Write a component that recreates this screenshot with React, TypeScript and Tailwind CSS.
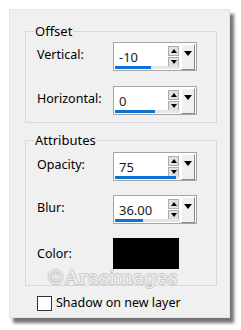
import React from 'react';

// Drop Shadow style dialog fragment: two group boxes with spin fields,
// a colour swatch and a "new layer" checkbox.

const FONT = { fontFamily: '"Noto Sans", "Liberation Sans", sans-serif' };

function SpinField({ value, fill }: { value: string; fill: number }) {
  return (
    <div className="relative w-[84px] h-[29px] border border-[#a5a5a5] bg-white flex">
      <div className="flex-1 relative">
        <span className="absolute left-[5px] top-[6px] text-[13px] leading-[16px] text-[#1a1a1a]">{value}</span>
        <div className="absolute left-[1px] bottom-[1px] w-[65px] h-[3px] bg-[#e6e6e6]">
          <div className="h-full bg-[#0a73d6]" style={{ width: `${fill}%` }} />
        </div>
      </div>
      {/* spin arrows */}
      <div className="flex flex-col gap-[1px] pt-[3px] pr-[2px]">
        <div className="w-[11px] h-[10px] border border-[#adadad] bg-[#e1e1e1] flex items-center justify-center">
          <div className="w-0 h-0 border-l-[3px] border-r-[3px] border-b-[4px] border-l-transparent border-r-transparent border-b-black" />
        </div>
        <div className="w-[11px] h-[10px] border border-[#adadad] bg-[#e1e1e1] flex items-center justify-center">
          <div className="w-0 h-0 border-l-[3px] border-r-[3px] border-t-[4px] border-l-transparent border-r-transparent border-t-black" />
        </div>
      </div>
      {/* dropdown button */}
      <div className="w-[14px] h-[26px] mt-[1px] mr-[1px] bg-[#f0f0f0] border-t border-l border-t-white border-l-white border-r border-b border-r-[#8a8a8a] border-b-[#8a8a8a] flex justify-center pt-[6px]">
        <div className="w-0 h-0 border-l-[4px] border-r-[4px] border-t-[5px] border-l-transparent border-r-transparent border-t-black" />
      </div>
    </div>
  );
}

function Row({ label, children }: { label: string; children: React.ReactNode }) {
  return (
    <div className="flex items-start">
      <span className="w-[76px] text-[12.5px] leading-[16px] text-black mt-[5px]">{label}</span>
      {children}
    </div>
  );
}

function Group({ title, className, children }: { title: string; className: string; children: React.ReactNode }) {
  return (
    <div className={`relative w-[192px] border border-[#d9d9d9] pl-[11px] ${className}`}>
      <span className="absolute left-[8px] top-[-9px] px-[1px] bg-[#f0f0f0] text-[13px] leading-[16px] text-black">{title}</span>
      {children}
    </div>
  );
}

export default function App() {
  return (
    <div className="w-[241px] h-[330px] bg-white pt-[9px] pl-[9px]" style={FONT}>
      <div className="relative w-[221px] h-[309px] bg-[#f0f0f0] border border-[#e4e4e4] shadow-[4px_5px_3px_rgba(0,0,0,0.55)] pt-[21px] pl-[15px]">
        <Group title="Offset" className="pt-[10px] pb-[7px] flex flex-col gap-[15px]">
          <Row label="Vertical:"><SpinField value="-10" fill={55} /></Row>
          <Row label="Horizontal:"><SpinField value="0" fill={62} /></Row>
        </Group>

        <Group title="Attributes" className="mt-[17px] pt-[11px] pb-[16px] flex flex-col gap-[14px]">
          <Row label="Opacity:"><SpinField value="75" fill={94} /></Row>
          <Row label="Blur:"><SpinField value="36.00" fill={43} /></Row>
          <div className="flex items-center">
            <span className="w-[76px] text-[12.5px] leading-[16px] text-black">Color:</span>
            <div className="w-[66px] h-[31px] bg-black" />
          </div>
          {/* watermark */}
          <span
            className="absolute left-[20px] top-[125px] text-[19px] leading-[22px] text-[#efefef] whitespace-nowrap"
            style={{
              fontFamily: '"DejaVu Serif", serif',
              textShadow: '1px 0 0 #c8c8c8, -1px 0 0 #c8c8c8, 0 1px 0 #c8c8c8, 0 -1px 0 #c8c8c8',
            }}
          >
            ©Arasimages
          </span>
        </Group>

        <label className="flex items-center gap-[4px] mt-[9px] ml-[12px]">
          <span className="w-[15px] h-[15px] border border-[#333] bg-white" />
          <span className="text-[12.5px] leading-[16px] text-black">Shadow on new layer</span>
        </label>
      </div>
    </div>
  );
}
